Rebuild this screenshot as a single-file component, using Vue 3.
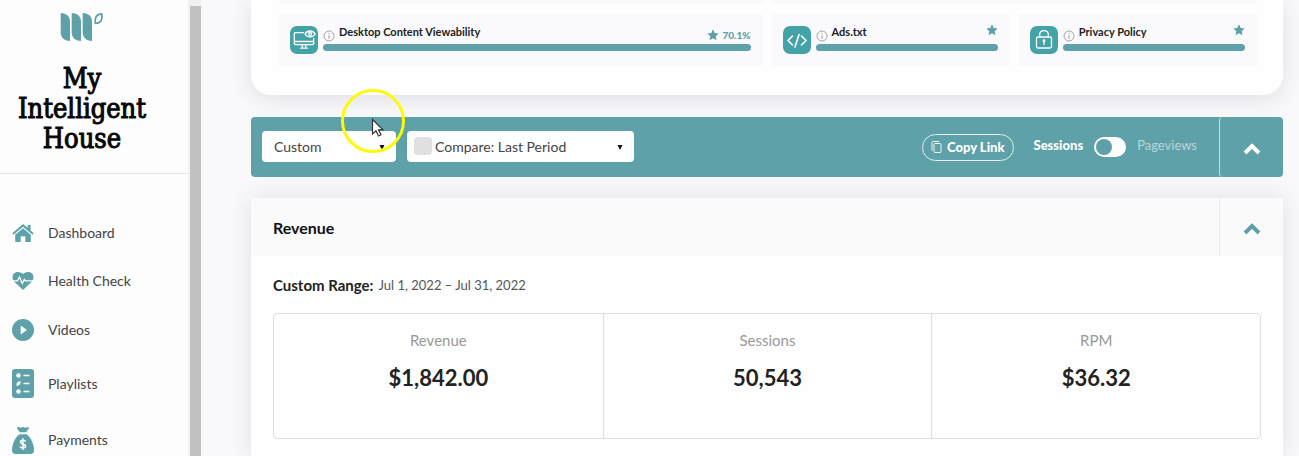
<script setup>
import { ref } from 'vue'

const navItems = [
  { label: 'Dashboard', icon: 'home' },
  { label: 'Health Check', icon: 'heart' },
  { label: 'Videos', icon: 'video' },
  { label: 'Playlists', icon: 'list' },
  { label: 'Payments', icon: 'bag' },
]

const checks = [
  { label: 'Desktop Content Viewability', icon: 'desktop', score: '70.1%' },
  { label: 'Ads.txt', icon: 'code', score: '' },
  { label: 'Privacy Policy', icon: 'lock', score: '' },
]

const stats = [
  { label: 'Revenue', value: '$1,842.00' },
  { label: 'Sessions', value: '50,543' },
  { label: 'RPM', value: '$36.32' },
]

const range = ref('Custom')
const compare = ref('Compare: Last Period')
const byPageviews = ref(false)
</script>

<template>
  <div class="app">
    <aside class="sidebar">
      <header class="brand">
        <svg class="logo" width="44" height="30" viewBox="0 0 44 30" aria-hidden="true">
          <g fill="#5ea1a8">
            <path d="M.7 1c6 0 9.300 3.500 9.300 9v19C4 29 .7 25.500 .7 20z" />
            <path d="M11.700 1c6 0 9.300 3.500 9.300 9v19c-6 0-9.300-3.500-9.300-9z" />
            <path d="M22.700 1c6 0 9.300 3.500 9.300 9v19c-6 0-9.300-3.500-9.300-9z" />
          </g>
          <path d="M41.800 1.800C42.700 8 41 11.300 35.300 11.300 34.400 5.500 36.500 2 41.800 1.800z" fill="none" stroke="#5ea1a8" stroke-width="1.800" stroke-linejoin="round" />
        </svg>
        <h1>My Intelligent House</h1>
      </header>
      <nav class="nav">
        <a v-for="item in navItems" :key="item.label" href="#" class="nav-link">
          <svg v-if="item.icon === 'home'" width="22" height="20" viewBox="0 0 22 20" fill="#5ea1a8">
            <path d="M11 1 .3 10.300l1.200 1.400L11 3.700l9.500 8 1.200-1.400L18.500 7.500V2h-2.800v3z" />
            <path d="M11 5.300 3.200 11.800V18.200c0 .5.400.8.800.8h4.700v-5.800h4.600V19H18c.5 0 .8-.3.8-.8v-6.400z" />
          </svg>
          <svg v-else-if="item.icon === 'heart'" width="22" height="20" viewBox="0 0 22 20">
            <path d="M11 19 2.500 11C-1.500 6.500 1 1 5.700 1 8.500 1 10 2 11 3.200 12 2 13.500 1 16.300 1 21 1 23.500 6.500 19.500 11z" fill="#5ea1a8" />
            <path d="M0 9.800h5.500L7.500 6l2.800 6.500 2-4 1 1.300H22" fill="none" stroke="#fdfdfd" stroke-width="1.300" />
          </svg>
          <svg v-else-if="item.icon === 'video'" width="22" height="22" viewBox="0 0 22 22">
            <circle cx="11" cy="11" r="11" fill="#5ea1a8" />
            <path d="M8.700 6.500v9L15 11z" fill="#fff" />
          </svg>
          <svg v-else-if="item.icon === 'list'" width="22" height="29" viewBox="0 0 22 29">
            <rect width="22" height="29" rx="3" fill="#5ea1a8" />
            <g fill="#fff">
              <circle cx="6.500" cy="6.500" r="2.200" />
              <path d="M4.300 16.700c0-3 1.600-4.400 4.500-4.400 0 3-1.500 4.800-4.500 4.400z" />
              <circle cx="6.500" cy="22.500" r="2.200" />
            </g>
            <path d="M11.500 6.500h6M11.500 14.500h6M11.500 22.500h6" stroke="#fff" stroke-width="1.300" />
          </svg>
          <svg v-else width="22" height="28" viewBox="0 0 22 28">
            <path d="M5 1.500c2-1.300 3 .6 4 .3C10 .7 12 .6 13 1.800c1.200.2 2-1.300 4-.3-.3 2.200-2 3-2.700 4.800H7.700C7 4.500 5.200 3.800 5 1.500z" fill="#5ea1a8" />
            <path d="M7.500 8.200h7C19.500 12 22 19 22 24c0 2.500-1.300 4-3.500 4h-15C1.300 28 0 26.500 0 24 0 19 2.500 12 7.500 8.200z" fill="#5ea1a8" />
            <path d="M13.700 15.500c-.6-.8-1.500-1.200-2.700-1.200-3.200 0-3.400 3-.3 3.700 3.800.8 3.600 4 .3 4-1.400 0-2.500-.6-3-1.500M11 12.300v11.600" fill="none" stroke="#fff" stroke-width="1.500" />
          </svg>
          <span>{{ item.label }}</span>
        </a>
      </nav>
    </aside>

    <div class="scroll-track" aria-hidden="true"><div class="scroll-thumb"></div></div>

    <main class="main">
      <section class="health">
        <div class="tiles previous">
          <div class="tile-edge"></div>
          <div class="tile-edge wide"></div>
        </div>
        <div class="tiles">
          <article v-for="check in checks" :key="check.label" class="tile">
            <span class="tile-icon">
              <svg width="28" height="28" viewBox="0 0 28 28" fill="none" stroke="#fff" stroke-width="1.300" stroke-linecap="round" stroke-linejoin="round">
                <template v-if="check.icon === 'desktop'">
                  <path d="M13.500 6.700H5.200c-.5 0-.9.400-.9.900v10c0 .6.400 1 1 1h17.400c.6 0 1-.4 1-1v-5.300M4.300 15.500h19.400M12.300 18.600v3.400M15.700 18.600v3.400M10.500 22.200h7" />
                  <path d="M15 8c2.500-4 7.700-4 10.200 0-2.500 4-7.700 4-10.200 0z" />
                  <circle cx="20.100" cy="8" r="1.500" />
                </template>
                <template v-else-if="check.icon === 'code'">
                  <path stroke-width="1.600" d="M9.500 10 5 14.500 9.500 19M18.500 10l4.500 4.500-4.500 4.500M16 8.500l-4 12.500" />
                </template>
                <template v-else>
                  <rect x="6.500" y="11" width="15" height="11" rx="1.500" />
                  <path d="M9.700 11V8.500c0-5.300 8.600-5.300 8.600 0V11M14 15.500v3" />
                  <circle cx="14" cy="14.800" r=".8" fill="#fff" />
                </template>
              </svg>
            </span>
            <div class="tile-body">
              <div class="tile-head">
                <svg class="info" width="12" height="12" viewBox="0 0 12 12" fill="none" stroke="#9b9a9e">
                  <circle cx="6" cy="6" r="5" stroke-width=".9" />
                  <path d="M6 5.200v3.600M6 3v1" />
                </svg>
                <span class="tile-label">{{ check.label }}</span>
                <span class="score" :class="{ raised: !check.score }">
                  <svg width="12" height="12" viewBox="0 0 12 12" fill="#5ea1a8">
                    <path d="m6 .3 1.700 3.700 4 .5-3 2.700.8 4L6 9.200l-3.500 2 .8-4-3-2.700 4-.5z" />
                  </svg>
                  <span v-if="check.score">{{ check.score }}</span>
                </span>
              </div>
              <div class="bar"></div>
            </div>
          </article>
        </div>
      </section>

      <section class="toolbar">
        <div class="filters">
          <label class="select range">
            <select v-model="range" aria-label="Date range">
              <option>Custom</option>
            </select>
            <svg class="caret" width="6" height="5" viewBox="0 0 6 5"><path d="M.5 0h5L3 5z" fill="#111" /></svg>
          </label>
          <label class="select compare">
            <span class="swatch"></span>
            <select v-model="compare" aria-label="Comparison period">
              <option>Compare: Last Period</option>
            </select>
            <svg class="caret" width="6" height="5" viewBox="0 0 6 5"><path d="M.5 0h5L3 5z" fill="#111" /></svg>
          </label>
        </div>
        <button class="copy" type="button">
          <svg width="11" height="12" viewBox="0 0 11 12" fill="none" stroke="#fff" stroke-width=".9">
            <rect x="3" y="2.500" width="7" height="9" rx="1" />
            <path d="M1 9.500v-8c0-.6.400-1 1-1h6" />
          </svg>
          <span>Copy Link</span>
        </button>
        <label class="metric">
          <strong>Sessions</strong>
          <input v-model="byPageviews" type="checkbox" role="switch" />
          <span>Pageviews</span>
        </label>
        <button class="collapse light" type="button" aria-label="Collapse filters">
          <svg width="18" height="12" viewBox="0 0 18 12"><path d="m2 10 7-7 7 7" fill="none" stroke="currentColor" stroke-width="4" /></svg>
        </button>
      </section>

      <section class="revenue">
        <header class="revenue-head">
          <h2>Revenue</h2>
          <button class="collapse" type="button" aria-label="Collapse revenue">
            <svg width="18" height="12" viewBox="0 0 18 12"><path d="m2 10 7-7 7 7" fill="none" stroke="currentColor" stroke-width="4" /></svg>
          </button>
        </header>
        <div class="revenue-body">
          <p class="period"><strong>Custom Range:</strong><span>Jul 1, 2022 – Jul 31, 2022</span></p>
          <dl class="stats">
            <div v-for="stat in stats" :key="stat.label" class="stat">
              <dt>{{ stat.label }}</dt>
              <dd>{{ stat.value }}</dd>
            </div>
          </dl>
        </div>
      </section>
    </main>

    <svg class="pointer" width="66" height="66" viewBox="0 0 66 66" aria-hidden="true">
      <circle cx="33" cy="33" r="30.500" fill="none" stroke="#fbfb0a" stroke-width="3" />
      <path d="M32.500 31.500v14.500l3.500-3.200 2.500 5.200 2.500-1.200-2.500-5h4.500z" fill="#fff" stroke="#333" stroke-width="1.200" />
    </svg>
  </div>
</template>

<style>
body {
  margin: 0;
}
</style>

<style scoped>
* {
  box-sizing: border-box;
}

.app {
  --teal: #5ea1a8;
  position: relative;
  display: flex;
  height: 100vh;
  overflow: hidden;
  background: #f9f9fb;
  color: #222;
  font-family: Lato, "Liberation Sans", sans-serif;
  font-size: 14px;
}

.sidebar {
  flex: 0 0 188px;
  background: #fdfdfd;
}

.brand {
  display: flex;
  flex-direction: column;
  align-items: center;
  height: 174px;
  padding: 12px 24px 0 0;
  border-bottom: 1px solid #e4e4e6;
}

.logo {
  flex: none;
}

h1 {
  width: 140px;
  margin: 22px 0 0;
  color: #080808;
  font-family: "DejaVu Serif Condensed", "DejaVu Serif", serif;
  font-size: 27px;
  font-weight: 400;
  line-height: 30px;
  text-align: center;
  -webkit-text-stroke: 1px #080808;
}

.nav {
  display: flex;
  flex-direction: column;
  padding-top: 35px;
}

.nav-link {
  display: flex;
  align-items: center;
  gap: 14px;
  padding: 14px 12px;
  color: #444;
  line-height: 20px;
  text-decoration: none;
}

.scroll-track {
  flex: 0 0 13px;
  padding: 6px 0 0 2px;
  background: #f1f1f1;
}

.scroll-thumb {
  width: 11px;
  height: 100%;
  background: #c1c1c1;
}

.main {
  display: flex;
  flex: 1;
  flex-direction: column;
  min-width: 0;
  padding: 0 16px 0 50px;
}

.health {
  flex: none;
  padding: 0 26px 29px 28px;
  border-radius: 0 0 20px 20px;
  background: #fefefe;
  box-shadow: 0 4px 22px #dfdee6;
}

.tiles {
  display: grid;
  grid-template-columns: 2.03fr 1fr 1fr;
  gap: 9px;
}

.previous {
  margin-bottom: 10px;
}

.tile-edge {
  height: 4px;
  background: #faf9fb;
}

.wide {
  grid-column: span 2;
}

.tile {
  display: flex;
  gap: 5px;
  height: 52px;
  padding: 12px 12px 0 11px;
  background: #faf9fb;
}

.tile-icon {
  flex: none;
  width: 28px;
  height: 28px;
  border-radius: 7px;
  background: #43a3a6;
}

.tile-body {
  flex: 1;
  min-width: 0;
}

.tile-head {
  display: flex;
  align-items: center;
  height: 18px;
}

.info {
  flex: none;
  margin-top: 2px;
}

.tile-label {
  flex: 1;
  padding: 0 0 6px 4px;
  font-size: 11px;
  font-weight: 700;
  line-height: 12px;
}

.score {
  display: flex;
  align-items: center;
  gap: 4px;
  color: var(--teal);
  font-size: 10px;
  font-weight: 900;
}

.raised {
  padding-bottom: 10px;
}

.bar {
  height: 7px;
  border-radius: 4px;
  background: var(--teal);
}

.toolbar {
  display: flex;
  flex: none;
  align-items: center;
  height: 60px;
  margin-top: 22px;
  border-radius: 4px;
  background: var(--teal);
  color: #fff;
}

.filters {
  display: flex;
  flex: 1;
  gap: 11px;
  padding: 0 0 2px 11px;
}

.select {
  position: relative;
  display: flex;
  align-items: center;
  height: 31px;
  border-radius: 4px;
  background: #fefefe;
}

.range {
  width: 134px;
  padding-left: 12px;
}

.compare {
  width: 227px;
  padding-left: 7px;
  gap: 3px;
}

.swatch {
  width: 18px;
  height: 18px;
  border-radius: 4px;
  background: #e2dfe0;
}

select {
  flex: 1;
  min-width: 0;
  height: 100%;
  padding: 0;
  border: 0;
  appearance: none;
  background: transparent;
  color: #444;
  font: inherit;
}

.caret {
  position: absolute;
  right: 11px;
  top: 14px;
  pointer-events: none;
}

button {
  border: 0;
  background: transparent;
  color: inherit;
  font: inherit;
  cursor: pointer;
}

.copy {
  display: flex;
  align-items: center;
  gap: 5px;
  height: 27px;
  padding: 0 8px;
  border: 1px solid #e4f0f1;
  border-radius: 14px;
  font-size: 13px;
  font-weight: 900;
}

.metric {
  display: flex;
  align-items: center;
  gap: 11px;
  margin: 0 22px 0 20px;
  font-size: 13px;
}

.metric strong,
.metric span {
  padding-bottom: 4px;
}

.metric strong {
  font-weight: 900;
}

.metric span {
  color: #b9d8db;
}

.metric input {
  display: flex;
  width: 32px;
  height: 20px;
  margin: 0;
  padding: 2px;
  border-radius: 10px;
  appearance: none;
  background: #fff;
}

.metric input::before {
  width: 16px;
  height: 16px;
  border-radius: 8px;
  background: var(--teal);
  content: "";
}

.metric input:checked {
  justify-content: flex-end;
}

.collapse {
  display: flex;
  align-items: center;
  justify-content: center;
  align-self: stretch;
  width: 64px;
  padding: 4px 0 0;
  border-left: 1px solid #e8e8ea;
  color: var(--teal);
}

.light {
  border-color: #c5dfe2;
  border-radius: 4px;
  color: #fff;
}

.revenue {
  flex: 1;
  margin-top: 21px;
  background: #fefefe;
  box-shadow: 0 0 22px #dfdee6;
}

.revenue-head {
  display: flex;
  align-items: center;
  justify-content: space-between;
  height: 58px;
  padding-left: 22px;
  background: #fafafa;
}

h2 {
  margin: 0;
  color: #111;
  font-size: 16px;
  font-weight: 700;
}

.revenue-body {
  padding: 19px 22px 16px;
}

.period {
  display: flex;
  gap: 5px;
  margin: 0 0 18px;
  font-size: 15px;
  line-height: 20px;
}

.period span {
  color: #555;
  font-size: 13px;
}

.stats {
  display: grid;
  grid-template-columns: repeat(3, 1fr);
  height: 126px;
  margin: 0;
  border: 1px solid #dedee0;
  border-radius: 4px;
}

.stat {
  padding-top: 16px;
  text-align: center;
}

.stat + .stat {
  border-left: 1px solid #dedee0;
}

dt {
  color: #999;
  font-size: 15px;
  line-height: 20px;
}

dd {
  margin: 13px 0 0;
  font-size: 22px;
  font-weight: 700;
  line-height: 30px;
}

.pointer {
  position: absolute;
  left: 340px;
  top: 88px;
  pointer-events: none;
}
</style>
